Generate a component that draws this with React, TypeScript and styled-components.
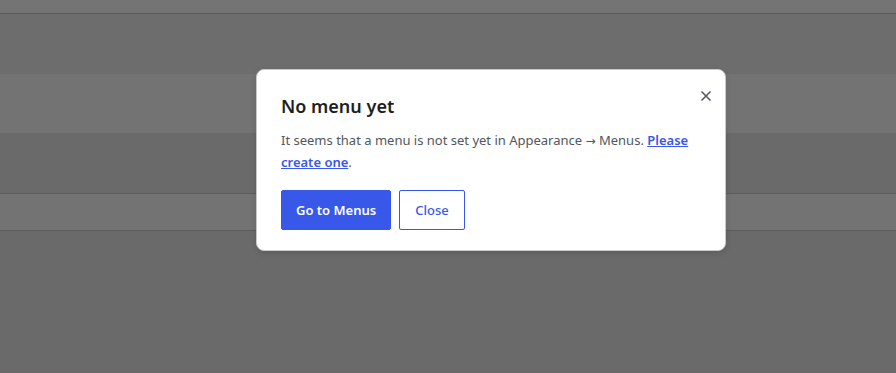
import React from "react";
import styled, { createGlobalStyle } from "styled-components";

const Global = createGlobalStyle`
  html, body { margin: 0; padding: 0; }
  body { background: #6b6b6b; font-family: "Noto Sans", "Liberation Sans", sans-serif; }
  * { box-sizing: border-box; }
`;

const Page = styled.div`
  width: 896px;
  height: 373px;
  position: relative;
  overflow: hidden;
  display: flex;
  flex-direction: column;
  background: #6a6a6a;
`;

const Band = styled.div<{ $h: number; $bg: string; $line?: boolean }>`
  height: ${(p) => p.$h}px;
  flex: none;
  background: ${(p) => p.$bg};
  border-bottom: ${(p) => (p.$line ? "1px solid #5c5c5c" : "none")};
`;

const Overlay = styled.div`
  position: absolute;
  inset: 0;
  display: flex;
  justify-content: flex-start;
  align-items: flex-start;
  padding-top: 69px;
  padding-left: 256px;
`;

const Modal = styled.div`
  position: relative;
  width: 470px;
  background: #fff;
  border: 1px solid #c9c9c9;
  border-radius: 8px;
  box-shadow: 0 2px 6px rgba(0, 0, 0, 0.12);
  padding: 23px 24px 20px 24px;
  display: flex;
  flex-direction: column;
`;

const Title = styled.h1`
  margin: 0;
  font-size: 18px;
  font-weight: 600;
  color: #1e1e1e;
  line-height: 26px;
`;

const Body = styled.p`
  margin: 10px 0 0 0;
  font-size: 13px;
  line-height: 22px;
  color: #50575e;
`;

const Arrow = styled.span`
  font-family: "DejaVu Sans", sans-serif;
  font-size: 12px;
  line-height: 1;
`;

const Link = styled.a`
  color: #3858e9;
  font-weight: 600;
  text-decoration: underline;
`;

const Actions = styled.div`
  display: flex;
  gap: 8px;
  margin-top: 17px;
`;

const Button = styled.button<{ $primary?: boolean }>`
  height: 40px;
  padding: 0 ${(p) => (p.$primary ? 14 : 15)}px;
  font-family: inherit;
  font-size: 13px;
  font-weight: ${(p) => (p.$primary ? 600 : 500)};
  border-radius: 2px;
  border: 1px solid #3858e9;
  background: ${(p) => (p.$primary ? "#3858e9" : "#fff")};
  color: ${(p) => (p.$primary ? "#fff" : "#3858e9")};
  cursor: pointer;
`;

const CloseX = styled.button`
  position: absolute;
  top: 18px;
  right: 11px;
  width: 16px;
  height: 16px;
  padding: 0;
  border: 0;
  background: none;
  display: flex;
  align-items: center;
  justify-content: center;
`;

export default function App() {
  return (
    <>
      <Global />
      <Page>
        <Band $h={14} $bg="#747474" $line />
        <Band $h={60} $bg="#6d6d6d" />
        <Band $h={59} $bg="#737373" />
        <Band $h={61} $bg="#6a6a6a" $line />
        <Band $h={37} $bg="#737373" $line />
        <Overlay>
          <Modal>
            <CloseX aria-label="Close">
              <svg width="12" height="12" viewBox="0 0 12 12">
                <path d="M1.5 1.5 L10.5 10.5 M10.5 1.5 L1.5 10.5" stroke="#50575e" strokeWidth="1.5" />
              </svg>
            </CloseX>
            <Title>No menu yet</Title>
            <Body>
              It seems that a menu is not set yet in Appearance <Arrow>→</Arrow> Menus. <Link href="#">Please create one</Link>.
            </Body>
            <Actions>
              <Button $primary>Go to Menus</Button>
              <Button>Close</Button>
            </Actions>
          </Modal>
        </Overlay>
      </Page>
    </>
  );
}
